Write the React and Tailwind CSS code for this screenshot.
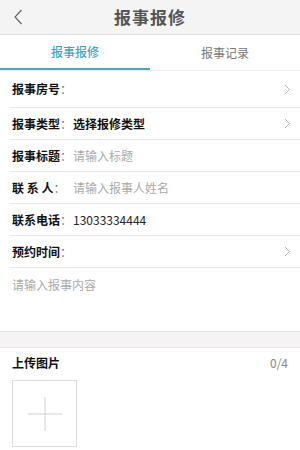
import React from "react";

const font = { fontFamily: '"Noto Sans CJK SC", "Noto Sans", sans-serif' };

function Chevron() {
  return (
    <svg width="7" height="11" viewBox="0 0 7 11" className="shrink-0">
      <path d="M1 1l4.5 4.5L1 10" fill="none" stroke="#b5b5b5" strokeWidth="1" />
    </svg>
  );
}

function Row({ label, children, arrow, first }) {
  return (
    <div
      className={`ml-[10px] border-b border-[#e8e8e8] flex items-center pl-[2px] pr-[9px] ${
        first ? "h-[37px]" : "h-[32px]"
      }`}
    >
      <span className="text-[12px] w-[61px] shrink-0 whitespace-pre">
        <span className="font-bold text-[#111]">{label}</span>
        <span className="text-[#777]">：</span>
      </span>
      <div className="flex-1 text-[12px]">{children}</div>
      {arrow && <Chevron />}
    </div>
  );
}

export default function App() {
  return (
    <div className="w-[300px] h-[450px] bg-white overflow-hidden" style={font}>
      <div className="h-[35px] bg-[#f4f4f4] border-b border-[#dcdcdc] flex items-center relative">
        <svg width="10" height="16" viewBox="0 0 10 16" className="absolute left-[13px] top-[9px]">
          <path d="M8.5 1L2 8l6.5 7" fill="none" stroke="#666" strokeWidth="1.2" />
        </svg>
        <div className="flex-1 text-center text-[17px] font-bold text-[#555] tracking-[1px]">
          报事报修
        </div>
      </div>
      <div className="h-[36px] flex border-b border-[#ececec]">
        <div className="flex-1 flex items-center justify-center text-[12px] font-medium text-[#35a9c4] border-b-2 border-[#4aa9b5]">
          报事报修
        </div>
        <div className="flex-1 flex items-center justify-center text-[12px] text-[#777]">
          报事记录
        </div>
      </div>
      <Row label="报事房号" arrow first />
      <Row label="报事类型" arrow>
        <span className="font-bold text-[#111]">选择报修类型</span>
      </Row>
      <Row label="报事标题">
        <span className="text-[#aaa]">请输入标题</span>
      </Row>
      <Row label="联 系 人">
        <span className="text-[#aaa]">请输入报事人姓名</span>
      </Row>
      <Row label="联系电话">
        <span className="text-[#222]">13033334444</span>
      </Row>
      <Row label="预约时间" arrow />
      <div className="h-[63px] px-[12px] pt-[8px] text-[12px] text-[#aaa]">请输入报事内容</div>
      <div className="h-[17px] bg-[#f5f3f3] border-y border-[#e4e4e4]" />
      <div className="px-[12px] pt-[7px]">
        <div className="flex items-center justify-between h-[16px]">
          <span className="text-[12px] font-bold text-[#111]">上传图片</span>
          <span className="text-[12px] text-[#888]">0/4</span>
        </div>
        <div className="mt-[9px] w-[65px] h-[67px] border border-[#dcdcdc] flex items-center justify-center">
          <svg width="34" height="34" viewBox="0 0 34 34">
            <path d="M17 0v34M0 17h34" stroke="#d0d0d0" strokeWidth="1" />
          </svg>
        </div>
      </div>
    </div>
  );
}
